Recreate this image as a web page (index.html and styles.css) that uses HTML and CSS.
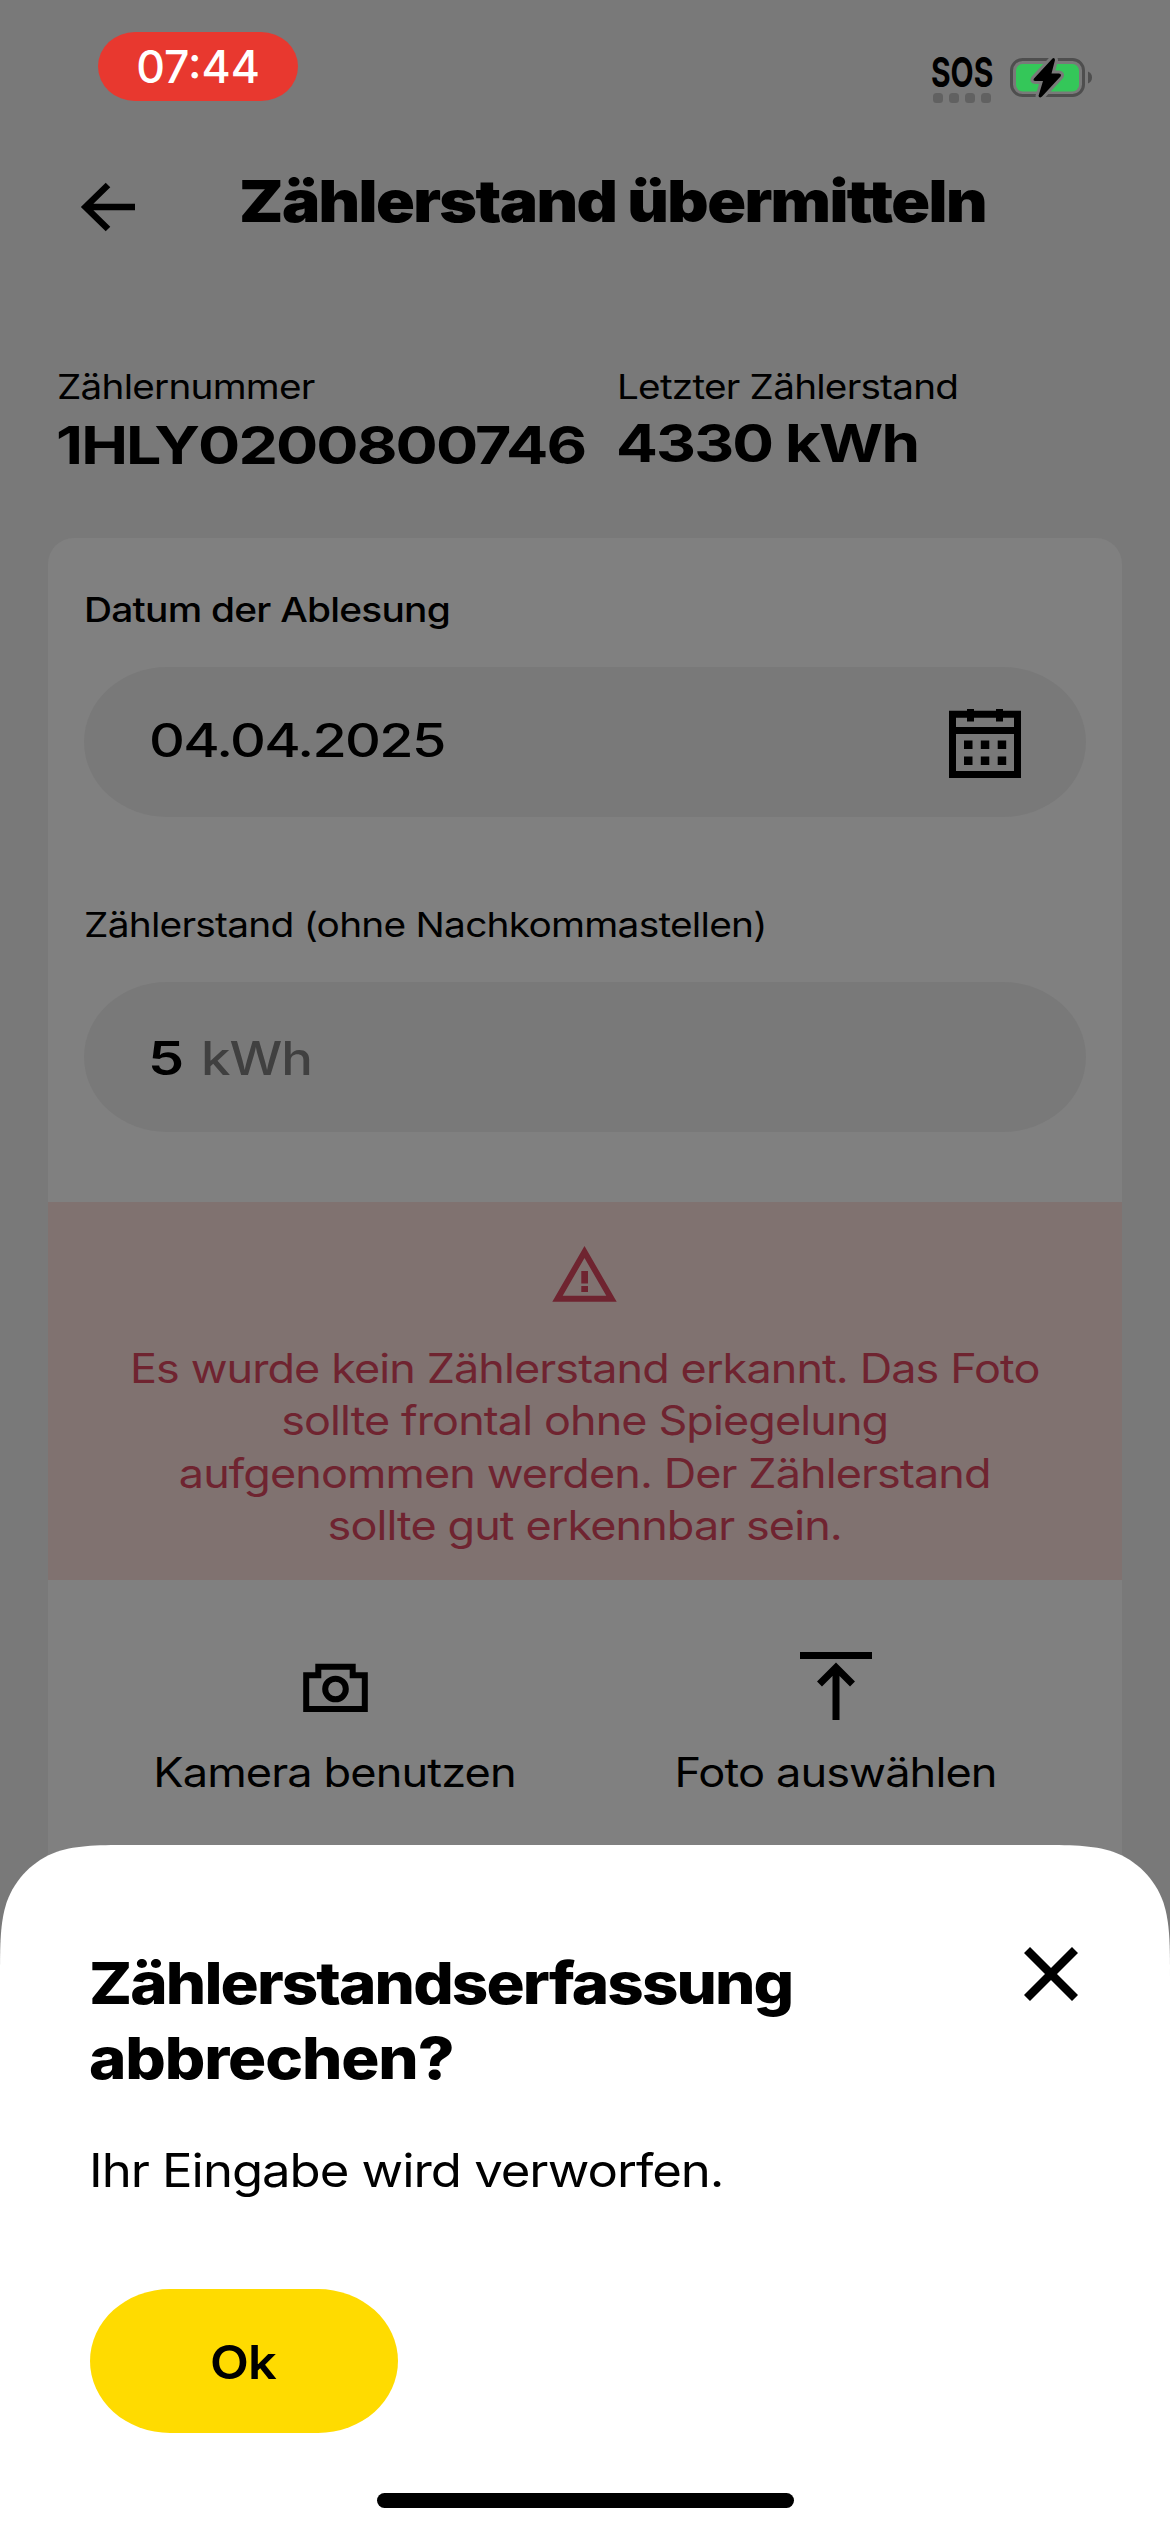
FILE: index.html
```
<!DOCTYPE html>
<html lang="de">
<head>
<meta charset="utf-8">
<title>Zählerstand übermitteln</title>
<link rel="stylesheet" href="styles.css">
</head>
<body>
<div class="app">
  <div class="status">
    <div class="status-time"><span class="time-text">07:44</span></div>
    <div class="status-right">
      <div class="signal">
        <span class="signal-text">SOS</span>
        <div class="dots"><i></i><i></i><i></i><i></i></div>
      </div>
      <svg class="battery" width="84" height="43" viewBox="0 0 84 43">
        <rect x="2.5" y="3.5" width="72" height="36" rx="11" fill="none" stroke="#4e4e4e" stroke-width="3"/>
        <rect x="7" y="8" width="63" height="27.5" rx="6.5" fill="#34c759"/>
        <path d="M79 15.5C81.500 16.500 83 18.700 83 21.500S81.500 26.500 79 27.500Z" fill="#4e4e4e"/>
        <path d="M43.500 2.500L25 22.500Q23.500 25 26.500 25H34L29.500 40Q30.500 42.500 33 40.500L51.500 20.500Q53 18 50 17.500H42.500L46 4Q45.500 1 43.500 2.500Z" fill="#000" stroke="#797979" stroke-width="6" stroke-linejoin="round" paint-order="stroke"/>
      </svg>
    </div>
  </div>

  <header class="header">
    <svg class="back" width="56" height="50" viewBox="0 0 56 50">
      <path d="M28 3L5.500 25L28 47M5.500 25H55" fill="none" stroke="#000" stroke-width="6.500"/>
    </svg>
    <h1 class="title">Zählerstand übermitteln</h1>
  </header>

  <section class="info">
    <div class="info-col">
      <span class="label info-label">Zählernummer</span>
      <span class="info-value">1HLY0200800746</span>
    </div>
    <div class="info-col">
      <span class="label info-label">Letzter Zählerstand</span>
      <span class="info-value info-value-reading">4330 kWh</span>
    </div>
  </section>

  <main class="card">
    <div class="form">
      <span class="label label-date">Datum der Ablesung</span>
      <div class="field">
        <span class="field-date">04.04.2025</span>
        <svg class="calendar" width="72" height="69" viewBox="0 0 72 69">
          <path d="M3.500 5.300H68.500V65.500H3.500ZM3.500 21.500H68.500" fill="none" stroke="#000" stroke-width="7"/>
          <path d="M18 0H25V12.500H18ZM47 0H54V12.500H47ZM15 31.500h8.500V40H15ZM31.800 31.500h8.500V40H31.800ZM48.700 31.500h8.500V40H48.700ZM15 47.500h8.500V56H15ZM31.800 47.500h8.500V56H31.800ZM48.700 47.500h8.500V56H48.700Z" fill="#000"/>
        </svg>
      </div>
      <span class="label label-reading">Zählerstand (ohne Nachkommastellen)</span>
      <div class="field">
        <span class="field-number">5</span>
        <span class="field-unit">kWh</span>
      </div>
    </div>

    <div class="alert">
      <svg class="alert-icon" width="66" height="60" viewBox="0 0 66 60">
        <path d="M33.500 8L6.500 54.800H60.500Z" fill="none" stroke="#6f2430" stroke-width="6"/>
        <path d="M30.300 27H37V39.500H30.300ZM30.300 42H37V48H30.300Z" fill="#6f2430"/>
      </svg>
      <p class="alert-text">Es wurde kein Zählerstand erkannt. Das Foto<br>sollte frontal ohne Spiegelung<br>aufgenommen werden. Der Zählerstand<br>sollte gut erkennbar sein.</p>
    </div>

    <div class="actions">
      <div class="action">
        <svg width="72" height="72" viewBox="0 0 72 72">
          <path d="M7.200 25.300H19.300V16.700H53.700V25.300H65.800V59H7.200Z" fill="none" stroke="#000" stroke-width="6"/>
          <circle cx="36.500" cy="39" r="10.300" fill="none" stroke="#000" stroke-width="6"/>
        </svg>
        <span class="action-label">Kamera benutzen</span>
      </div>
      <div class="action">
        <svg width="72" height="72" viewBox="0 0 72 72">
          <path d="M0 5.500H72M36 70V17.500M19.500 34L36 17.500L52.500 34" fill="none" stroke="#000" stroke-width="7"/>
        </svg>
        <span class="action-label">Foto auswählen</span>
      </div>
    </div>
  </main>

  <div class="sheet">
    <div class="sheet-head">
      <h2 class="sheet-title">Zählerstandserfassung<br><span class="sheet-title-end">abbrechen?</span></h2>
      <svg class="close" width="54" height="54" viewBox="0 0 54 54">
        <path d="M3 3L51 51M51 3L3 51" stroke="#000" stroke-width="8.500"/>
      </svg>
    </div>
    <p class="sheet-text">Ihr Eingabe wird verworfen.</p>
    <button class="ok"><span class="ok-text">Ok</span></button>
    <div class="home"></div>
  </div>
</div>
</body>
</html>
```
FILE: styles.css
```
* { box-sizing: border-box; }
body {
  margin: 0;
  font-family: Inter, "Liberation Sans", sans-serif;
  color: #000;
}
h1, h2, p { margin: 0; }
svg { display: block; flex: none; }
span, h1, h2, p { white-space: nowrap; }

.app {
  position: relative;
  width: 1170px;
  height: 2532px;
  overflow: hidden;
  background: #797979;
  display: flex;
  flex-direction: column;
}

.status {
  height: 134px;
  flex: none;
  display: flex;
  justify-content: space-between;
  align-items: flex-start;
  padding: 32px 77px 0 98px;
}
.status-time {
  width: 200px;
  height: 69px;
  border-radius: 37px / 34.5px;
  background: #e8382f;
  color: #fff;
  display: flex;
  align-items: center;
  justify-content: center;
}
.time-text { font-size: 44.500px; font-weight: 500; line-height: 69px; padding-top: 1px; }
.status-right { display: flex; gap: 16px; padding-top: 24px; }
.signal { width: 62px; padding-top: 1px; }
.signal-text {
  display: block;
  width: 62px;
  font-size: 41px;
  font-weight: 700;
  line-height: 30px;
  transform: scaleX(.731);
  transform-origin: 0 50%;
}
.dots { display: flex; gap: 6px; margin: 6px 0 0 2px; }
.dots i { width: 10px; height: 10px; border-radius: 3.500px; background: #616161; }

.header {
  height: 134px;
  flex: none;
  display: flex;
  align-items: center;
  padding-left: 80px;
}
.back { margin-top: 12px; }
.title {
  margin: 0 0 0 103px;
  font-size: 58px;
  font-weight: 900;
  line-height: 70px;
  letter-spacing: -.025em;
  transform: scaleX(1.105);
  transform-origin: 0 50%;
}

.info {
  display: grid;
  grid-template-columns: 560px 1fr;
  padding: 98px 0 0 56px;
  height: 270px;
  flex: none;
}
.info-col { display: flex; flex-direction: column; align-items: flex-start; }
.label {
  font-size: 34.500px;
  line-height: 42px;
  letter-spacing: -.02em;
  transform: scaleX(1.127);
  transform-origin: 0 50%;
}
.info-label { transform: scaleX(1.122); margin-left: .5px; }
.info-value {
  margin-top: 7px;
  font-size: 52.500px;
  font-weight: 700;
  line-height: 60px;
  letter-spacing: -.03em;
  transform: scaleX(1.193);
  transform-origin: 0 50%;
}
.info-value-reading { margin-top: 5px; transform: scaleX(1.180); }

.card {
  flex: 1;
  margin: 0 48px;
  border-radius: 26px 26px 0 0;
  background: #808080;
}
.form {
  height: 664px;
  padding: 51px 36px 0;
  display: flex;
  flex-direction: column;
}
.form .label { align-self: flex-start; }
.label-date { font-weight: 500; }
.form .label-reading { margin-top: 87px; }
.field {
  height: 150px;
  flex: none;
  margin-top: 36px;
  padding: 0 65px 0 65px;
  border-radius: 83px / 75px;
  background: #797979;
  display: flex;
  align-items: center;
  font-size: 46px;
}
.field-date {
  font-weight: 500;
  margin-top: -4px;
  letter-spacing: -.03em;
  transform: scaleX(1.210);
  transform-origin: 0 50%;
}
.calendar { margin: 2px 0 0 auto; }
.field-number {
  flex: none;
  width: 51px;
  margin: 2px 0 0 -1px;
  font-weight: 600;
  transform: scaleX(1.250);
  transform-origin: 0 50%;
}
.field-unit {
  margin: 2px 0 0 2px;
  color: #404040;
  font-weight: 500;
  letter-spacing: -.02em;
  transform: scaleX(1.145);
  transform-origin: 0 50%;
}

.alert {
  height: 378px;
  padding-top: 42px;
  background: #807270;
  color: #6f2430;
  display: flex;
  flex-direction: column;
  align-items: center;
}
.alert-icon { margin-right: 3px; }
.alert-text {
  margin-top: 39px;
  font-size: 40.500px;
  line-height: 52.400px;
  letter-spacing: -.02em;
  text-align: center;
  transform: scaleX(1.110);
}

.actions {
  display: grid;
  grid-template-columns: 1fr 1fr;
  padding: 70px 36px 0;
}
.action { display: flex; flex-direction: column; align-items: center; }
.action-label {
  margin-top: 26px;
  font-size: 40.500px;
  line-height: 50px;
  letter-spacing: -.02em;
  transform: scaleX(1.115);
}

.sheet {
  position: absolute;
  left: 0;
  bottom: 0;
  width: 1170px;
  height: 687px;
  padding: 101px 92px 0 89px;
  background: #fff;
  clip-path: path("M0 137.500C0 98 0 78 6.750 57C15.200 33.500 33.500 15.200 57 6.750C78 0 98 0 137.500 0H1032.500C1072 0 1092 0 1113 6.750C1136.500 15.200 1154.800 33.500 1163.250 57C1170 78 1170 98 1170 137.500V687H0Z");
}
.sheet-head { display: flex; justify-content: space-between; align-items: flex-start; }
.sheet-title {
  font-size: 58px;
  font-weight: 800;
  line-height: 75px;
  letter-spacing: -.03em;
  transform: scaleX(1.098);
  transform-origin: 0 50%;
}
.sheet-title-end { letter-spacing: -.018em; }
.close { margin-top: 1px; }
.sheet-text {
  margin-top: 44px;
  font-size: 46px;
  line-height: 60px;
  letter-spacing: -.02em;
  transform: scaleX(1.105);
  transform-origin: 0 50%;
  width: 900px;
}
.ok {
  display: flex;
  align-items: center;
  justify-content: center;
  width: 308px;
  height: 144px;
  margin: 89px 0 0 1px;
  padding: 0;
  border: 0;
  border-radius: 80px / 72px;
  background: #ffdb00;
  color: #000;
  font: 600 46px/60px Inter, "Liberation Sans", sans-serif;
}
.ok-text { letter-spacing: -.02em; transform: scaleX(1.100); margin: 2px 2px 0 0; }
.home {
  width: 417px;
  height: 15px;
  margin: 60px 0 0 288px;
  border-radius: 8px;
  background: #000;
}
```
